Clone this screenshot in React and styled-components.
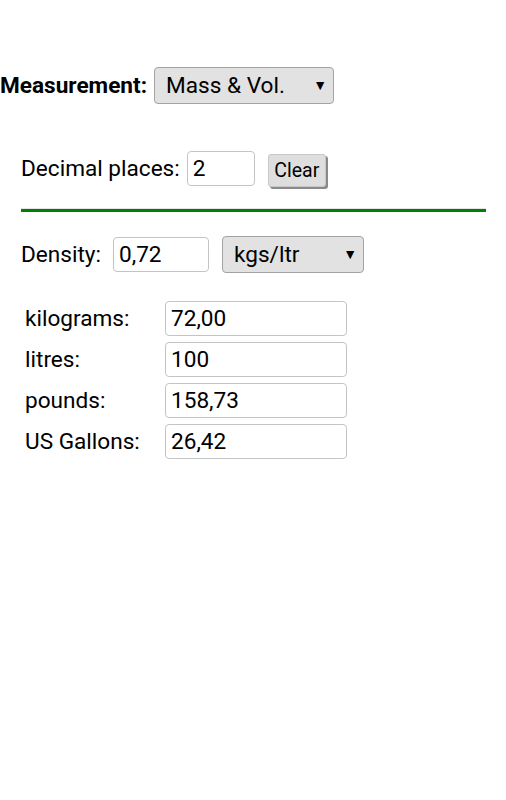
import React, { useState } from "react";
import styled, { createGlobalStyle } from "styled-components";

const GlobalStyle = createGlobalStyle`
  body {
    margin: 0;
    background: #fff;
    font-family: Roboto, "Liberation Sans", sans-serif;
    color: #000;
  }
`;

const Page = styled.div`
  width: 506px;
  padding-top: 67px;
`;

const TopRow = styled.div`
  display: flex;
  align-items: center;
  gap: 7px;
`;

const BoldLabel = styled.label`
  font-size: 22.6px;
  font-weight: 700;
`;

const SelectWrap = styled.div`
  position: relative;
  width: ${(p) => p.$width}px;
  height: 37px;
  margin-left: ${(p) => p.$left || 0}px;
`;

const Select = styled.select`
  appearance: none;
  width: 100%;
  height: 100%;
  box-sizing: border-box;
  border: 1px solid #a3a3a3;
  border-radius: 4px;
  background: #e2e2e2;
  font-family: Roboto, "Liberation Sans", sans-serif;
  font-size: 22.6px;
  color: #000;
  padding: 0 0 0 11px;
  outline: none;
`;

const Arrow = styled.span`
  position: absolute;
  right: 7px;
  top: 50%;
  transform: translateY(-58%);
  font-size: 14px;
  pointer-events: none;
`;

const Section = styled.div`
  padding: 0 20px 0 21px;
`;

const Row = styled.div`
  display: flex;
  align-items: center;
  margin-top: ${(p) => p.$top}px;
`;

const Label = styled.label`
  font-size: 22.6px;
  margin-right: ${(p) => p.$gap}px;
`;

const Input = styled.input`
  width: ${(p) => p.$width}px;
  height: 35px;
  box-sizing: border-box;
  border: 1px solid #c4c4c4;
  border-radius: 4px;
  font-family: Roboto, "Liberation Sans", sans-serif;
  font-size: 22.6px;
  padding: 0 5px;
  color: #000;
  outline: none;
`;

const ClearButton = styled.button`
  margin-left: 13px;
  margin-top: 4px;
  width: 58px;
  height: 33px;
  border: 1px solid #c8c8c8;
  border-radius: 3px;
  background: #dedede;
  box-shadow: 2px 2px 0 #8a8a8a;
  font-family: Roboto, "Liberation Sans", sans-serif;
  font-size: 19.5px;
  color: #000;
  padding: 0;
`;

const Rule = styled.div`
  margin-top: 22px;
  height: 3px;
  background: #008000;
  box-shadow: 0 -1px 0 #e4e4e4;
`;

const Grid = styled.div`
  display: grid;
  grid-template-columns: 140px 182px;
  row-gap: 6px;
  margin-top: 28px;
  padding-left: 4px;
  align-items: center;
`;

const GridLabel = styled.label`
  font-size: 22.6px;
`;

const results = [
  ["kilograms:", "72,00"],
  ["litres:", "100"],
  ["pounds:", "158,73"],
  ["US Gallons:", "26,42"],
];

const App = () => {
  const [places, setPlaces] = useState("2");
  const [density, setDensity] = useState("0,72");

  return (
    <Page>
      <GlobalStyle />
      <TopRow>
        <BoldLabel>Measurement:</BoldLabel>
        <SelectWrap $width={180}>
          <Select defaultValue="mv">
            <option value="mv">Mass &amp; Vol.</option>
            <option value="len">Length</option>
          </Select>
          <Arrow>▼</Arrow>
        </SelectWrap>
      </TopRow>

      <Section>
        <Row $top={46}>
          <Label $gap={7}>Decimal places:</Label>
          <Input $width={68} value={places} onChange={(e) => setPlaces(e.target.value)} />
          <ClearButton>Clear</ClearButton>
        </Row>

        <Rule />

        <Row $top={24}>
          <Label $gap={12}>Density:</Label>
          <Input $width={96} value={density} onChange={(e) => setDensity(e.target.value)} />
          <SelectWrap $width={142} $left={13}>
            <Select defaultValue="kl">
              <option value="kl">kgs/ltr</option>
              <option value="lg">lbs/gal</option>
            </Select>
            <Arrow>▼</Arrow>
          </SelectWrap>
        </Row>

        <Grid>
          {results.map(([name, val]) => (
            <React.Fragment key={name}>
              <GridLabel>{name}</GridLabel>
              <Input $width={182} defaultValue={val} />
            </React.Fragment>
          ))}
        </Grid>
      </Section>
    </Page>
  );
};

export default App;
